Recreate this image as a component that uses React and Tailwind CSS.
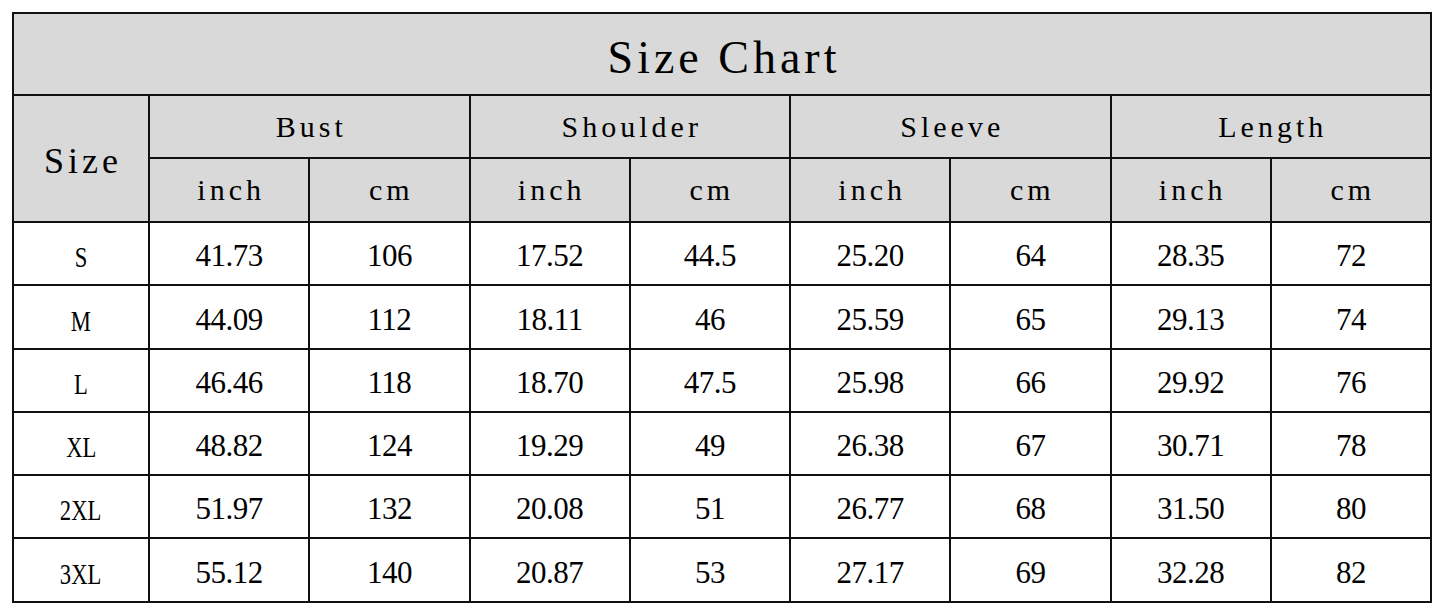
// Size chart — grouped header with inch/cm measurements per size
const GROUPS = ['Bust', 'Shoulder', 'Sleeve', 'Length'];

const ROWS = [
  { size: 'S', values: ['41.73', '106', '17.52', '44.5', '25.20', '64', '28.35', '72'] },
  { size: 'M', values: ['44.09', '112', '18.11', '46', '25.59', '65', '29.13', '74'] },
  { size: 'L', values: ['46.46', '118', '18.70', '47.5', '25.98', '66', '29.92', '76'] },
  { size: 'XL', values: ['48.82', '124', '19.29', '49', '26.38', '67', '30.71', '78'] },
  { size: '2XL', values: ['51.97', '132', '20.08', '51', '26.77', '68', '31.50', '80'] },
  { size: '3XL', values: ['55.12', '140', '20.87', '53', '27.17', '69', '32.28', '82'] },
];

const serif = "font-['Liberation_Serif','Times_New_Roman',serif]";

export default function App() {
  return (
    <div className={`min-h-screen bg-white pt-3 pl-3 text-black ${serif}`}>
      <div className="grid w-[1420px] grid-cols-[134px_repeat(8,minmax(0,1fr))] grid-rows-[80px_61px_62px_61px_62px_61px_61px_61px_62px] gap-[2px] bg-[#111] p-[2px]">
        <div className="col-span-9 flex items-center justify-center bg-[#d9d9d9] pt-2 pl-[4px] text-[46px] leading-none tracking-[4px]">
          Size Chart
        </div>

        <div className="row-span-2 flex items-center justify-center bg-[#d9d9d9] pt-1 pl-[4px] text-[36px] leading-none tracking-[4px]">
          Size
        </div>
        {GROUPS.map(g => (
          <div key={g} className="col-span-2 flex items-center justify-center bg-[#d9d9d9] pl-[4px] text-[30px] leading-none tracking-[4px]">
            {g}
          </div>
        ))}
        {GROUPS.flatMap(g => ['inch', 'cm'].map(u => (
          <div key={g + u} className="flex items-center justify-center bg-[#d9d9d9] pl-[4px] text-[30px] leading-none tracking-[4px]">
            {u}
          </div>
        )))}

        {ROWS.map(row => [
          <div key={row.size} className="flex items-center justify-center bg-white pt-2">
            <span className="inline-block scale-x-[0.78] text-[29px] leading-none">{row.size}</span>
          </div>,
          ...row.values.map((v, i) => (
            <div key={row.size + i} className="flex items-center justify-center bg-white pt-1 text-[31px] leading-none tracking-[-0.5px]">
              {v}
            </div>
          )),
        ])}
      </div>
    </div>
  );
}
